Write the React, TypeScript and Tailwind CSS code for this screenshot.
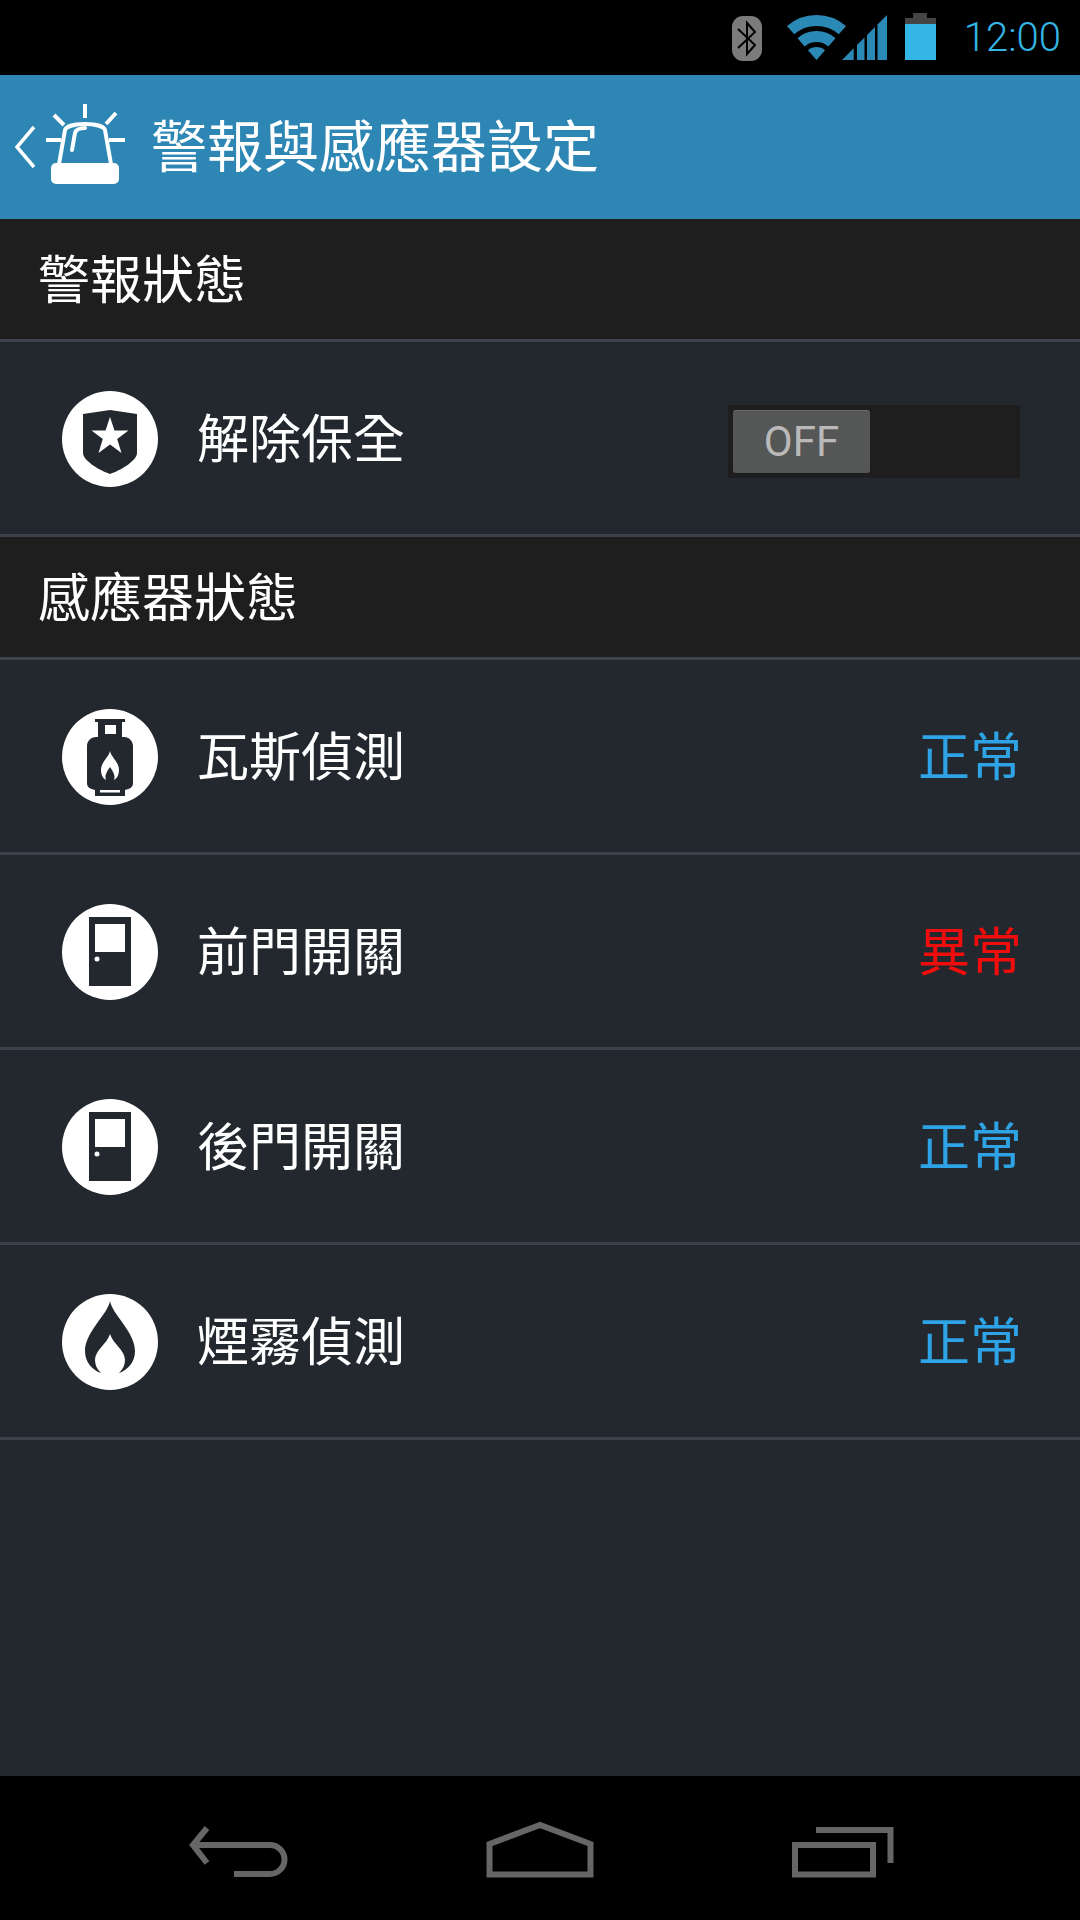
const CJK = "font-['Noto_Sans_CJK_TC',sans-serif]";

function BluetoothIcon() {
  return (
    <svg width="30" height="50" viewBox="0 0 30 50">
      <rect x="0" y="4" width="30" height="45" rx="11" fill="#7b7b7b" />
      <path d="M6 17 L23 33 L15 42 V11 L23 20 L6 36" fill="none" stroke="#000" strokeWidth="2" />
    </svg>
  );
}

function WifiIcon() {
  return (
    <svg width="59" height="50" viewBox="0 0 59 50">
      <g transform="translate(0 3)" fill="none" stroke="#2b8ab5" strokeWidth="11">
        <path d="M3.6 15.2 A39.5 39.5 0 0 1 55.4 15.2" />
        <path d="M14.1 27.3 A23.5 23.5 0 0 1 44.9 27.3" />
      </g>
      <path d="M29.5 48 L21 38.2 A13 13 0 0 1 38 38.2 Z" fill="#2b8ab5" />
    </svg>
  );
}

function SignalIcon() {
  return (
    <svg width="45" height="50" viewBox="0 0 45 50" fill="#2b8ab5">
      <polygon points="0,48 11.7,48 11.7,36.3" />
      <polygon points="15,48 22.5,48 22.5,25.5 15,33" />
      <polygon points="25,48 33,48 33,15 25,23" />
      <polygon points="35.5,48 45,48 45,3 35.5,12.5" />
    </svg>
  );
}

function BatteryIcon() {
  return (
    <svg width="31" height="50" viewBox="0 0 31 50">
      <rect x="8" y="1" width="14" height="6" fill="#444" />
      <rect x="0" y="6" width="31" height="6" fill="#444" />
      <rect x="0" y="12" width="31" height="36" fill="#33b5e5" />
    </svg>
  );
}

function AlarmIcon() {
  return (
    <svg width="90" height="90" viewBox="0 0 90 90" fill="none" stroke="#fff" strokeWidth="4">
      <path d="M45 4 V18 M14 15 L24 25 M76 13 L66 24 M6 40 H21 M69 40 H85" />
      <path d="M19 64 L25 30 C28 22 62 22 65 30 L71 64" />
      <path d="M32 50 L35 33 C36 29 41 28 45 28" strokeLinecap="round" />
      <rect x="11" y="63" width="68" height="21" rx="5" fill="#fff" stroke="none" />
    </svg>
  );
}

function ShieldIcon() {
  return (
    <svg width="96" height="96" viewBox="0 0 96 96">
      <circle cx="48" cy="48" r="48" fill="#fff" />
      <path d="M21 23 L48 19 L75 23 V62 C75 70 57 80 48 83 C39 80 21 70 21 62 Z" fill="#23282f" />
      <polygon
        points="48,26 52.5,39.5 66.5,39.5 55.2,48 59.5,62 48,53.6 36.5,62 40.8,48 29.5,39.5 43.5,39.5"
        fill="#fff"
      />
    </svg>
  );
}

function GasIcon() {
  return (
    <svg width="96" height="96" viewBox="0 0 96 96">
      <circle cx="48" cy="48" r="48" fill="#fff" />
      <path
        d="M33 10 H63 V13 H60 V28 H62 C67 28 71 32 71 37 V74 C71 78 68 80 63 81 V87 H33 V81 C28 80 25 78 25 74 V37 C25 32 29 28 34 28 H36 V13 H33 Z"
        fill="#23282f"
      />
      <rect x="43" y="16" width="11" height="9" fill="#fff" />
      <rect x="38" y="81" width="20" height="2.5" fill="#fff" />
      <path
        d="M48 42 C49 48 57 53 57 61 C57 67 54 70 52 71 C53 68 53 65 48 58 C43 65 43 68 44 71 C42 70 39 67 39 61 C39 53 47 48 48 42 Z"
        fill="#fff"
      />
    </svg>
  );
}

function DoorIcon() {
  return (
    <svg width="96" height="96" viewBox="0 0 96 96">
      <circle cx="48" cy="48" r="48" fill="#fff" />
      <rect x="27" y="13" width="42" height="69" fill="#23282f" />
      <rect x="33" y="20" width="30" height="28" fill="#fff" />
      <circle cx="35" cy="55" r="2.5" fill="#fff" />
    </svg>
  );
}

function FlameIcon() {
  return (
    <svg width="96" height="96" viewBox="0 0 96 96">
      <circle cx="48" cy="48" r="48" fill="#fff" />
      <path
        d="M48 7 C50 20 73 38 73 57 C73 68 66 76 57 79 C61 75 63 71 63 66 C63 56 51 50 48 40 C45 50 33 56 33 66 C33 71 35 75 39 79 C30 76 23 68 23 57 C23 38 46 20 48 7 Z"
        fill="#23282f"
      />
    </svg>
  );
}

function SectionHeader({ title }: { title: string }) {
  return (
    <div className="flex h-[123px] items-center border-b-[3px] border-[#3c424b] bg-[#1e1e1e] pb-[4px] pl-[38px]">
      <span className={`${CJK} text-[52px] leading-none text-white`}>{title}</span>
    </div>
  );
}

function Row({ icon, label, children }: { icon: React.ReactNode; label: string; children: React.ReactNode }) {
  return (
    <div className="flex h-[195px] items-center border-b-[3px] border-[#3c424b] pb-[2px] pl-[62px] pr-[58px]">
      <div className="mt-[3px]">{icon}</div>
      <span className={`${CJK} mb-[3px] ml-[39px] flex-1 text-[52px] leading-none text-white`}>{label}</span>
      {children}
    </div>
  );
}

function Status({ text, bad }: { text: string; bad?: boolean }) {
  return (
    <span className={`${CJK} mb-[3px] text-[52px] leading-none ${bad ? 'text-[#f20d0d]' : 'text-[#2ea3e6]'}`}>
      {text}
    </span>
  );
}

export default function App() {
  return (
    <div className="flex h-[1920px] w-[1080px] flex-col overflow-hidden bg-[#23282f]">
      {/* status bar */}
      <div className="flex h-[75px] items-start justify-end bg-black pr-[19px] pt-[12px]">
        <BluetoothIcon />
        <div className="ml-[25px]">
          <WifiIcon />
        </div>
        <div className="ml-[-4px]">
          <SignalIcon />
        </div>
        <div className="ml-[18px]">
          <BatteryIcon />
        </div>
        <span className="ml-[28px] mt-[4px] font-['Roboto',sans-serif] text-[40px] font-light leading-[44px] text-[#33b5e5]">
          12:00
        </span>
      </div>

      {/* action bar */}
      <div className="flex h-[144px] items-center bg-[#2d86b4] pl-[14px]">
        <svg width="22" height="44" viewBox="0 0 22 44" fill="none" stroke="#fff" strokeWidth="3.5">
          <path d="M20 2 L3 22 L20 42" />
        </svg>
        <div className="mb-[5px] ml-[4px]">
          <AlarmIcon />
        </div>
        <span className={`${CJK} mb-[9px] ml-[21px] text-[56px] leading-none text-white`}>警報與感應器設定</span>
      </div>

      <SectionHeader title="警報狀態" />
      <Row icon={<ShieldIcon />} label="解除保全">
        <div className="mr-[2px] mt-[9px] flex h-[73px] w-[292px] bg-[#1e1e1e] p-[5px]">
          <div className="flex h-full w-[137px] items-center justify-center rounded-[3px] border-t border-[#6a6c6b] bg-[#555756]">
            <span className="font-['Roboto',sans-serif] text-[42px] leading-none text-[#b9b9b9]">OFF</span>
          </div>
        </div>
      </Row>

      <SectionHeader title="感應器狀態" />
      <Row icon={<GasIcon />} label="瓦斯偵測">
        <Status text="正常" />
      </Row>
      <Row icon={<DoorIcon />} label="前門開關">
        <Status text="異常" bad />
      </Row>
      <Row icon={<DoorIcon />} label="後門開關">
        <Status text="正常" />
      </Row>
      <Row icon={<FlameIcon />} label="煙霧偵測">
        <Status text="正常" />
      </Row>

      <div className="flex-1" />

      {/* nav bar */}
      <div className="flex h-[144px] justify-between bg-black px-[178px] pt-[39px]">
        <svg width="120" height="70" viewBox="0 0 120 70" fill="none" stroke="#666" strokeWidth="6">
          <path d="M29 13 L15 30 L29 48 M15 30 H92 A14.5 14.5 0 0 1 92 59 H56" />
        </svg>
        <svg width="120" height="70" viewBox="0 0 120 70" fill="none" stroke="#666" strokeWidth="6">
          <path d="M9.5 59.5 V29 L60 10 L110.5 29 V59.5 Z" />
        </svg>
        <svg width="120" height="70" viewBox="0 0 120 70" fill="none" stroke="#666" strokeWidth="6">
          <rect x="13" y="30" width="78" height="29.5" />
          <path d="M34 15 H108.5 V48" />
        </svg>
      </div>
    </div>
  );
}
